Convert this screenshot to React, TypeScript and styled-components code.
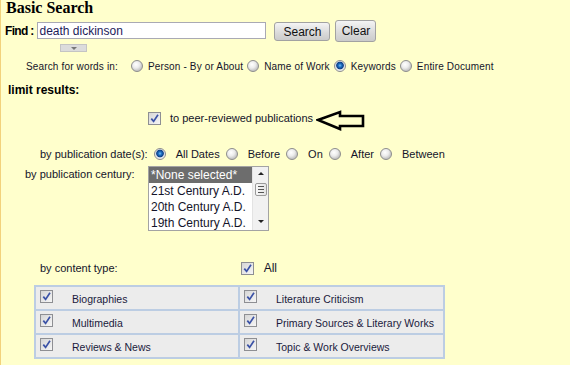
import styled, { createGlobalStyle } from 'styled-components';

const Global = createGlobalStyle`
  html, body { margin: 0; padding: 0; background: #ffffcc; }
`;

const dates = ['All Dates', 'Before', 'On', 'After', 'Between'];
const words = ['Person - By or About', 'Name of Work', 'Keywords', 'Entire Document'];
const centuries = ['*None selected*', '21st Century A.D.', '20th Century A.D.', '19th Century A.D.'];
const types = [
  ['Biographies', 'Literature Criticism'],
  ['Multimedia', 'Primary Sources & Literary Works'],
  ['Reviews & News', 'Topic & Work Overviews'],
];

export default function App() {
  return (
    <Page>
      <Global />
      <Title>Basic Search</Title>

      <FindRow>
        <FindLabel>Find :</FindLabel>
        <TextBox defaultValue="death dickinson" />
        <Btn $w={56} $h={19} $top={2} $left={8}>Search</Btn>
        <Btn $w={41} $h={22} $top={0} $left={5}>Clear</Btn>
      </FindRow>

      <MiniDrop><Tri $color="#777" $size={3} /></MiniDrop>

      <Row $top={7} $left={25} $size={10} $spacing={0.15}>
        <Label>Search for words in:</Label>
        <Options $first={13} $between={4}>
          {words.map(w => (
            <Option key={w} $gap={5}>
              <RadioDot $checked={w === 'Keywords'} />
              {w}
            </Option>
          ))}
        </Options>
      </Row>

      <Row $top={10} $left={7} $size={12}>
        <Strong>limit results:</Strong>
      </Row>

      <Row $top={14} $left={147} $size={11}>
        <Option $gap={9}>
          <Check />
          to peer-reviewed publications
        </Option>
        <Arrow width="50" height="23" viewBox="0 0 50 23">
          <path d="M2 11 L24 3 L24 7 L47 7 L47 17 L24 17 L24 20 Z" fill="none" stroke="#000" strokeWidth="2.6" strokeLinejoin="miter" />
        </Arrow>
      </Row>

      <Row $top={22} $left={39} $size={11}>
        <Label>by publication date(s):</Label>
        <Options $first={6} $between={6}>
          {dates.map(d => (
            <Option key={d} $gap={10}>
              <RadioDot $checked={d === 'All Dates'} />
              {d}
            </Option>
          ))}
        </Options>
      </Row>

      <CenturyRow>
        <CenturyLabel>by publication century:</CenturyLabel>
        <ListBox>
          <Items>
            {centuries.map((c, i) => (
              <Item key={c} $selected={i === 0}>{c}</Item>
            ))}
          </Items>
          <ScrollBar>
            <Tri $color="#222" $size={3} $up />
            <Thumb><Grip /><Grip /><Grip /></Thumb>
            <Tri $color="#222" $size={3} />
          </ScrollBar>
        </ListBox>
      </CenturyRow>

      <Row $top={30} $left={39} $size={11}>
        <Label>by content type:</Label>
        <AllOpt>
          <Check />
          All
        </AllOpt>
      </Row>

      <Table>
        {types.flat().map(t => (
          <Cell key={t}>
            <Check />
            <CellText>{t}</CellText>
          </Cell>
        ))}
      </Table>
    </Page>
  );
}

function Check() {
  return (
    <Box>
      <svg width="11" height="11" viewBox="0 0 11 11">
        <path d="M2.3 5.6 L4.6 8.4 L9 1.8" fill="none" stroke="#3b52a6" strokeWidth="1.7" />
      </svg>
    </Box>
  );
}

/* layout */

const Page = styled.div`
  width: 570px;
  height: 365px;
  box-sizing: border-box;
  overflow: hidden;
  background: #ffffcc;
  border-left: 1px solid #f2d27c;
  color: #14142a;
  font-family: 'Liberation Sans', Arial, sans-serif;
`;

const Title = styled.div`
  margin: 0 0 0 5px;
  height: 14px;
  line-height: 15px;
  font-family: 'Liberation Serif', 'Times New Roman', serif;
  font-weight: bold;
  font-size: 16px;
  color: #000;
`;

const FindRow = styled.div`
  display: flex;
  align-items: flex-start;
  margin-top: 6px;
  padding-left: 4px;
  height: 22px;
`;

const FindLabel = styled.span`
  font-weight: bold;
  font-size: 12px;
  letter-spacing: -0.7px;
  line-height: 22px;
  color: #000;
`;

const TextBox = styled.input`
  margin: 2px 0 0 4px;
  width: 229px;
  height: 17px;
  box-sizing: border-box;
  border: 1px solid #a9a9b4;
  background: #fff;
  padding: 0 1px;
  font-family: 'Liberation Sans', Arial, sans-serif;
  font-size: 12px;
  color: #1c1c5a;
  outline: none;
`;

const Btn = styled.button<{ $w: number; $h: number; $top: number; $left: number }>`
  width: ${p => p.$w}px;
  height: ${p => p.$h}px;
  margin: ${p => p.$top}px 0 0 ${p => p.$left}px;
  padding: 0;
  border: 1px solid #a2a2a2;
  border-radius: 3px;
  background: linear-gradient(#f4f4f4, #d9d9d9 60%, #cbcbcb);
  font-family: 'Liberation Sans', Arial, sans-serif;
  font-size: 12px;
  color: #111;
`;

const MiniDrop = styled.div`
  display: flex;
  align-items: center;
  justify-content: center;
  margin: 2px 0 0 59px;
  width: 27px;
  height: 8px;
  box-sizing: border-box;
  border: 1px solid #c4c4c4;
  background: #dcdcdc;
`;

const Tri = styled.span<{ $color: string; $size: number; $up?: boolean }>`
  width: 0;
  height: 0;
  border-left: ${p => p.$size}px solid transparent;
  border-right: ${p => p.$size}px solid transparent;
  ${p => (p.$up ? 'border-bottom' : 'border-top')}: ${p => p.$size}px solid ${p => p.$color};
`;

const Row = styled.div<{ $top: number; $left: number; $size: number; $spacing?: number }>`
  display: flex;
  align-items: center;
  height: 14px;
  margin-top: ${p => p.$top}px;
  padding-left: ${p => p.$left}px;
  font-size: ${p => p.$size}px;
  letter-spacing: ${p => p.$spacing ?? 0}px;
  white-space: nowrap;
`;

const Label = styled.span``;

const Strong = styled.span`
  font-weight: bold;
  color: #000;
`;

const Options = styled.div<{ $first: number; $between: number }>`
  display: flex;
  align-items: center;
  gap: ${p => p.$between}px;
  margin-left: ${p => p.$first}px;
`;

const Option = styled.label<{ $gap: number }>`
  display: inline-flex;
  align-items: center;
  gap: ${p => p.$gap}px;
`;

const RadioDot = styled.span<{ $checked?: boolean }>`
  width: 12px;
  height: 12px;
  box-sizing: border-box;
  border-radius: 50%;
  border: 1px solid #8d8d8d;
  background: ${p =>
    p.$checked
      ? 'radial-gradient(circle at 50% 45%, #7cc0f4 0, #1f73c6 1.6px, #0d3f86 3.4px, #d9e0e8 4.2px, #fafafa 6px)'
      : 'radial-gradient(circle at 40% 35%, #ffffff 0, #ececec 3.5px, #c8c8c8 6px)'};
`;

const Box = styled.span`
  display: inline-flex;
  align-items: center;
  justify-content: center;
  flex-shrink: 0;
  width: 13px;
  height: 13px;
  box-sizing: border-box;
  border: 1px solid #8e8f93;
  background: linear-gradient(135deg, #d6d6d6, #f6f6f6);
`;

const Arrow = styled.svg`
  margin: 4px 0 0 3px;
  flex-shrink: 0;
`;

const CenturyRow = styled.div`
  display: flex;
  align-items: flex-start;
  margin-top: 5px;
  padding-left: 24px;
  font-size: 11px;
`;

const CenturyLabel = styled.span`
  width: 123px;
  line-height: 16px;
`;

const ListBox = styled.div`
  display: flex;
  width: 121px;
  height: 65px;
  box-sizing: border-box;
  border: 1px solid #a3a3a3;
  background: #fff;
`;

const Items = styled.div`
  flex: 1;
  overflow: hidden;
`;

const Item = styled.div<{ $selected?: boolean }>`
  height: 16px;
  line-height: 16px;
  padding-left: 2px;
  font-size: 12px;
  white-space: nowrap;
  color: ${p => (p.$selected ? '#fff' : '#14142a')};
  background: ${p => (p.$selected ? '#6d6d6d' : 'transparent')};
`;

const ScrollBar = styled.div`
  width: 16px;
  display: flex;
  flex-direction: column;
  align-items: center;
  padding: 5px 0 7px;
  box-sizing: border-box;
  background: #f1f1f1;
  border-left: 1px solid #e3e3e3;
  justify-content: space-between;
`;

const Thumb = styled.div`
  margin-top: -17px;
  width: 12px;
  height: 13px;
  box-sizing: border-box;
  border: 1px solid #9b9b9b;
  border-radius: 2px;
  background: linear-gradient(90deg, #f8f8f8, #e4e4e4);
  display: flex;
  flex-direction: column;
  justify-content: center;
  align-items: center;
  gap: 2px;
`;

const Grip = styled.span`
  width: 6px;
  height: 1px;
  background: #555;
`;

const AllOpt = styled.label`
  display: inline-flex;
  align-items: center;
  gap: 10px;
  margin-left: 123px;
  font-size: 12px;
`;

const Table = styled.div`
  display: grid;
  grid-template-columns: 202px 203px;
  grid-auto-rows: 22px;
  gap: 2px;
  padding: 2px;
  margin: 10px 0 0 33px;
  width: 411px;
  box-sizing: border-box;
  background: #bccde3;
`;

const Cell = styled.div`
  display: flex;
  align-items: flex-start;
  padding: 3px 0 0 4px;
  background: #ececec;
`;

const CellText = styled.span`
  margin: 3px 0 0 19px;
  font-size: 10.5px;
  line-height: 12px;
  color: #1a1a3c;
  white-space: nowrap;
`;
